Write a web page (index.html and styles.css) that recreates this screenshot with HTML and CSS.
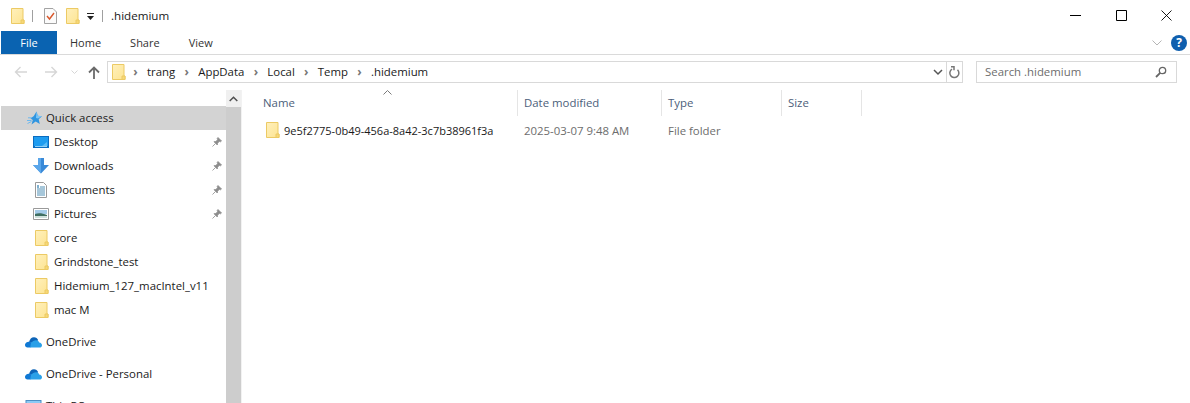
FILE: index.html
```html
<!DOCTYPE html>
<html lang="en">
<head>
<meta charset="utf-8">
<title>.hidemium</title>
<link rel="stylesheet" href="styles.css">
</head>
<body>
<svg class="defs" width="0" height="0" aria-hidden="true">
  <defs>
    <linearGradient id="folder-fill" x1="0" y1="0" x2="1" y2="1">
      <stop offset="0" stop-color="#fff0bc"/>
      <stop offset="1" stop-color="#fde491"/>
    </linearGradient>
    <symbol id="folder" viewBox="0 0 14 16">
      <path d="M.5.500h11.500v11.500h1v3.500H.5z" fill="url(#folder-fill)" stroke="#ecca64"/>
      <path d="M10 15.500v-3.500h3v3.500z" fill="#f7d877" stroke="#ecca64"/>
    </symbol>
    <symbol id="pin" viewBox="0 0 10 10">
      <path d="M6 .5 9.500 4 8.500 4.800 7.300 4.300 5.500 6.300 5.300 8 2 4.700 3.800 4.500 5.700 2.700 5.200 1.500zM3.400 6.600.5 9.500" fill="#8b8b8b" stroke="#8b8b8b" stroke-width=".8"/>
    </symbol>
    <symbol id="cloud" viewBox="0 0 17 11">
      <path d="M4 5.500C4.600 2.200 6.500.3 9 .3c2 0 3.400 1 4.200 2.900L9 6z" fill="#0c64b8"/>
      <path d="M1.800 5.200C2.600 4.600 4 4.500 5.300 5.100L9 6.500 5.500 10.500H2.500C1 10.500 0 9.300 0 8 0 6.800.7 5.800 1.800 5.200z" fill="#0f78d4"/>
      <path d="M6 6c1.500-1.800 3.800-3.200 6-2.600 1.200.3 1.900 1 2.200 2C15.900 5.700 17 6.800 17 8.200c0 1.400-1.100 2.300-2.500 2.300H5.200z" fill="#2aa0e8"/>
    </symbol>
  </defs>
</svg>

<header class="titlebar">
  <svg class="qat-folder" width="14" height="16"><use href="#folder"/></svg>
  <span class="qat-sep"></span>
  <svg class="qat-check" width="13" height="16" viewBox="0 0 13 16">
    <path d="M.5.500h8.500l3.500 3.500v11.500H.5z" fill="#fbfbfb" stroke="#a3a3a3"/>
    <path d="M3 8l2.500 3 4.500-6" fill="none" stroke="#d9572b" stroke-width="1.400"/>
  </svg>
  <svg class="qat-folder2" width="14" height="16"><use href="#folder"/></svg>
  <svg class="qat-drop" width="8" height="8" viewBox="0 0 8 8">
    <path d="M0 0h7v1H0z" fill="#222"/><path d="M0 3h7L3.500 7z" fill="#222"/>
  </svg>
  <span class="qat-sep qat-sep-2"></span>
  <span class="title-text">.hidemium</span>
  <div class="window-controls">
    <svg width="11" height="11" viewBox="0 0 11 11"><path d="M0 5.500h11" stroke="#000"/></svg>
    <svg width="11" height="11" viewBox="0 0 11 11"><path d="M.5.500h10v10H.5z" fill="none" stroke="#000"/></svg>
    <svg width="11" height="11" viewBox="0 0 11 11"><path d="M.5.500l10 10M10.500.500l-10 10" stroke="#000" stroke-width=".9"/></svg>
  </div>
</header>

<nav class="ribbon">
  <span class="tab-file">File</span>
  <span class="tab tab-home">Home</span>
  <span class="tab tab-share">Share</span>
  <span class="tab tab-view">View</span>
  <svg class="ribbon-chevron" width="10" height="6" viewBox="0 0 10 6"><path d="M.5.500 5 5l4.500-4.500" fill="none" stroke="#b5b5b5"/></svg>
  <span class="help">?</span>
</nav>

<section class="addressrow">
  <svg class="nav-back" width="14" height="12" viewBox="0 0 14 12"><path d="M13 6H1.500M6.500 1l-5 5 5 5" fill="none" stroke="#d6d6d6" stroke-width="1.400"/></svg>
  <svg class="nav-fwd" width="14" height="12" viewBox="0 0 14 12"><path d="M1 6h11.500M7.500 1l5 5-5 5" fill="none" stroke="#d6d6d6" stroke-width="1.400"/></svg>
  <svg class="nav-down" width="7" height="5" viewBox="0 0 7 5"><path d="M.5.500l3 3 3-3" fill="none" stroke="#d6d6d6"/></svg>
  <svg class="nav-up" width="12" height="13" viewBox="0 0 12 13"><path d="M6 13V1.500M1 6.500l5-5 5 5" fill="none" stroke="#6b6b6b" stroke-width="1.800"/></svg>
  <div class="addressbar">
    <svg class="addr-folder" width="14" height="16"><use href="#folder"/></svg>
    <span class="crumb-sep">›</span><span class="crumb">trang</span>
    <span class="crumb-sep">›</span><span class="crumb">AppData</span>
    <span class="crumb-sep">›</span><span class="crumb">Local</span>
    <span class="crumb-sep">›</span><span class="crumb">Temp</span>
    <span class="crumb-sep">›</span><span class="crumb">.hidemium</span>
    <svg class="addr-chevron" width="10" height="7" viewBox="0 0 10 7"><path d="M1 1l4 4 4-4" fill="none" stroke="#555" stroke-width="1.500"/></svg>
    <span class="addr-refresh">
      <svg width="11" height="13" viewBox="0 0 11 13"><path d="M3 3.200A4.500 4.500 0 1 0 8.500 3.800M2 .800h3v3.500" fill="none" stroke="#777" stroke-width="1.500"/></svg>
    </span>
  </div>
  <div class="searchbox">
    <span>Search .hidemium</span>
    <svg width="12" height="12" viewBox="0 0 12 12"><circle cx="7.500" cy="4.500" r="3.200" fill="none" stroke="#666" stroke-width="1.300"/><path d="M5.200 6.800 1 11" stroke="#666" stroke-width="1.800"/></svg>
  </div>
</section>

<main class="explorer">
  <aside class="sidebar">
    <div class="navlist">
      <div class="row row-top row-selected">
        <svg width="15" height="15" viewBox="0 0 15 15">
          <path d="M9.500.500 10.800 4.800 15 5.200 11.700 8.200 12.800 13 8.700 10.500 4.500 13.500 5.800 9 3.500 7.500 6.800 5z" fill="#2f95e0"/>
          <path d="M9.500.500 10.800 4.800 15 5.200 11 7.500 9 7z" fill="#7cc5f5"/>
          <path d="M1 6.800h4M0 9.500h4.500M.5 12.500l4-2" stroke="#6db8ee"/>
        </svg>
        <span>Quick access</span>
      </div>
      <div class="row row-child">
        <svg width="16" height="12" viewBox="0 0 16 12"><path d="M0 0h16v12H0z" fill="#0a6cc0"/><path d="M1 1h14v9H1z" fill="#1e9cf0"/><path d="M9 10l5-4v4z" fill="#5cbcf5"/><path d="M2 10.500h12" stroke="#8fd0f8"/></svg>
        <span class="label">Desktop</span>
        <svg class="pin" width="10" height="10"><use href="#pin"/></svg>
      </div>
      <div class="row row-child">
        <svg width="16" height="16" viewBox="0 0 16 16"><path d="M5 0h6v7h5l-8 8.500L0 7h5z" fill="#3a8ad8"/><path d="M5 0h3v15.500L0 7h5z" fill="#5aa6ea"/></svg>
        <span class="label">Downloads</span>
        <svg class="pin" width="10" height="10"><use href="#pin"/></svg>
      </div>
      <div class="row row-child">
        <svg width="16" height="16" viewBox="0 0 16 16"><path d="M2.500.500h8l3 3v12h-11z" fill="#fff" stroke="#9a9a9a"/><path d="M7 5h5M4 7h8M4 9h8M4 11h8M4 13h8" stroke="#4f8fb5"/><path d="M4 3h2v3H4z" fill="#7fb0cf"/></svg>
        <span class="label">Documents</span>
        <svg class="pin" width="10" height="10"><use href="#pin"/></svg>
      </div>
      <div class="row row-child">
        <svg width="16" height="12" viewBox="0 0 16 12"><path d="M.5.500h15v11H.5z" fill="#fff" stroke="#9a9a9a"/><path d="M2 2h12v4H2z" fill="#a4cbe8"/><path d="M2 6c3-1 7-1 12 1v1H2z" fill="#3f6f62"/><path d="M2 8h12v2H2z" fill="#cfe0dc"/></svg>
        <span class="label">Pictures</span>
        <svg class="pin" width="10" height="10"><use href="#pin"/></svg>
      </div>
      <div class="row row-folder"><svg width="14" height="16"><use href="#folder"/></svg><span class="label">core</span></div>
      <div class="row row-folder"><svg width="14" height="16"><use href="#folder"/></svg><span class="label">Grindstone_test</span></div>
      <div class="row row-folder"><svg width="14" height="16"><use href="#folder"/></svg><span class="label">Hidemium_127_macIntel_v11</span></div>
      <div class="row row-folder"><svg width="14" height="16"><use href="#folder"/></svg><span class="label">mac M</span></div>
      <div class="row row-top row-group"><svg width="17" height="11"><use href="#cloud"/></svg><span>OneDrive</span></div>
      <div class="row row-top row-group"><svg width="17" height="11"><use href="#cloud"/></svg><span>OneDrive - Personal</span></div>
      <div class="row row-top row-group">
        <svg width="16" height="13" viewBox="0 0 16 13"><path d="M0 0h16v11H0z" fill="#4d8fc4"/><path d="M1 1h14v9H1z" fill="#8ccaf5"/></svg>
        <span>This PC</span>
      </div>
    </div>
    <div class="scrollbar">
      <div class="scroll-up"><svg width="9" height="6" viewBox="0 0 9 6"><path d="M.7 5 4.500 1.200 8.300 5" fill="none" stroke="#505050" stroke-width="1.500"/></svg></div>
      <div class="scroll-thumb"></div>
    </div>
  </aside>
  <section class="files">
    <div class="sort-caret"><svg width="9" height="5" viewBox="0 0 9 5"><path d="M.5 4.500l4-4 4 4" fill="none" stroke="#7a7a7a"/></svg></div>
    <div class="colhead">
      <span class="col col-name">Name</span>
      <span class="col col-date">Date modified</span>
      <span class="col col-type">Type</span>
      <span class="col col-size">Size</span>
    </div>
    <div class="filerow">
      <span class="col col-name cell-name"><svg width="14" height="16"><use href="#folder"/></svg><span class="file-title">9e5f2775-0b49-456a-8a42-3c7b38961f3a</span></span>
      <span class="col col-date cell-muted">2025-03-07 9:48 AM</span>
      <span class="col col-type cell-muted">File folder</span>
      <span class="col col-size"></span>
    </div>
  </section>
</main>
</body>
</html>
```
FILE: styles.css
```css
* { box-sizing: border-box; }
html, body { margin: 0; padding: 0; }
body {
  width: 1190px; height: 403px; overflow: hidden; background: #fff; color: #1a1a1a;
  font-family: "Open Sans", "Noto Sans", "Liberation Sans", sans-serif; font-size: 11.4px;
}
.defs { display: block; height: 0; }
svg { display: block; flex: none; }

.titlebar { display: flex; align-items: center; height: 31px; padding-left: 11px; }
.qat-folder { margin-right: 7px; }
.qat-sep { width: 1px; height: 12px; background: #a0a0a0; margin-right: 11px; }
.qat-check { margin-right: 9px; }
.qat-folder2 { margin-right: 7px; }
.qat-drop { margin-right: 7px; margin-top: 3px; }
.qat-sep-2 { margin-right: 8px; }
.title-text { font-size: 11.6px; }
.window-controls { margin-left: auto; display: flex; gap: 34px; margin-right: 18px; align-items: center; }
.window-controls svg:nth-child(1) { margin-right: 1px; }

.ribbon { display: flex; align-items: center; height: 24px; border-bottom: 1px solid #dadada; padding-left: 1px; font-size: 11px; }
.tab-file { width: 56px; height: 23px; background: #0a63b1; color: #fff; display: flex; align-items: center; justify-content: center; }
.tab { color: #333; }
.tab-home { margin-left: 13px; }
.tab-share { margin-left: 29px; }
.tab-view { margin-left: 29px; }
.ribbon-chevron { margin-left: auto; margin-right: 9px; }
.help { width: 16px; height: 16px; border-radius: 50%; background: #0f5fae; color: #fff; font-weight: 700; font-size: 12px; line-height: 16px; text-align: center; margin-right: 3px; }

.addressrow { display: flex; align-items: center; height: 35px; padding: 6px 0 7px; }
.nav-back { margin-left: 14px; }
.nav-fwd { margin-left: 16px; }
.nav-down { margin-left: 13px; }
.nav-up { margin-left: 10px; }
.addressbar { display: flex; align-items: center; height: 22px; width: 856px; margin-left: 7px; border: 1px solid #d9d9d9; padding-left: 4px; color: #1a1a1a; }
.addr-folder { margin-right: -2px; }
.crumb-sep { width: 23px; text-align: center; color: #777; font-weight: 700; font-size: 12px; padding-bottom: 2px; }
.crumb { padding-bottom: 1px; }
.crumb:last-of-type { margin-left: -1px; }
.addr-chevron { margin-left: auto; margin-right: 3px; }
.addr-refresh { display: flex; align-items: center; justify-content: center; width: 16px; height: 20px; border-left: 1px solid #d9d9d9; }
.searchbox { display: flex; align-items: center; justify-content: space-between; width: 201px; height: 22px; margin-left: 13px; border: 1px solid #d9d9d9; padding: 0 9px 1px 8px; color: #6d6d6d; }

.explorer { display: flex; height: 313px; }
.sidebar { display: flex; width: 242px; flex: none; overflow: hidden; border-right: 1px solid #f2f2f2; }
.navlist { width: 226px; flex: none; padding-top: 16px; }
.row { display: flex; align-items: center; height: 24px; flex: none; color: #1a1a1a; }
.row span { padding-bottom: 2px; }
.row-top { padding-left: 25px; gap: 4px; }
.row-top svg { width: 17px; }
.row-selected { background: #d3d3d3; margin-left: 1px; padding-left: 26px; gap: 4px; }
.row-selected svg { width: 15px; }
.row-group { margin-top: 8px; }
.row-child { padding-left: 33px; }
.row-child > svg:first-child { width: 16px; margin-right: 5px; }
.row-folder { padding-left: 35px; }
.row-folder > svg { margin-right: 5px; }
.label { flex: 1; }
.pin { margin-right: 4px; }
.scrollbar { width: 15px; flex: none; display: flex; flex-direction: column; background: #f0f0f0; }
.scroll-up { height: 17px; flex: none; display: flex; align-items: center; justify-content: center; }
.scroll-thumb { flex: 1; background: #cdcdcd; }

.files { flex: 1; position: relative; }
.sort-caret { position: absolute; left: 141px; top: 0; }
.colhead { display: flex; height: 26px; color: #4c607a; }
.colhead .col { padding-bottom: 2px; }
.filerow { display: flex; height: 22px; margin-top: 3px; align-items: center; }
.col { display: flex; align-items: center; flex: none; padding-left: 6px; }
.colhead .col { border-right: 1px solid #e5e5e5; }
.col-name { width: 276px; padding-left: 21px; }
.col-date { width: 144px; }
.col-type { width: 120px; }
.col-size { width: 80px; }
.cell-name { padding-left: 24px; gap: 4px; color: #1a1a1a; }
.file-title { font-size: 11px; }
.cell-muted { color: #6d6d6d; }
```
